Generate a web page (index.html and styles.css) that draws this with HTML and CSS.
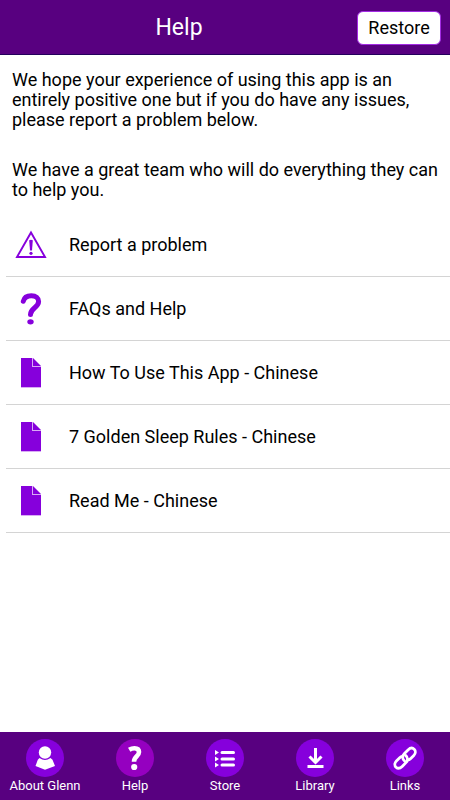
FILE: index.html
```html
<!DOCTYPE html>
<html lang="en">
<head>
<meta charset="utf-8">
<meta name="viewport" content="width=device-width, initial-scale=1">
<title>Help</title>
<link rel="stylesheet" href="styles.css">
</head>
<body>
<svg class="symbols" aria-hidden="true">
  <symbol id="document" viewBox="0 0 20 30">
    <path fill="#8600dc" d="M0 0h11v9h9v20H0z"/>
    <path fill="#8600dc" d="M12 0l8 8h-8z"/>
    <path fill="#d9abf4" d="M0 29h20v1H0zM11 0h1v8h8v1h-9z"/>
  </symbol>
</svg>
<header class="topbar">
  <h1 class="title">Help</h1>
  <button class="restore" type="button">Restore</button>
</header>
<main class="content">
  <div class="intro">
    <p>We hope your experience of using this app is an entirely positive one but if you do have any issues, please report a problem below.</p>
    <p>We have a great team who will do everything they can to help you.</p>
  </div>
  <ul class="list">
    <li><a class="row" href="#report">
      <svg class="icon" viewBox="0 0 32 32" aria-hidden="true"><path d="M16 3.500L30 28H2z" fill="none" stroke="#8600dc" stroke-width="1.900"/><path d="M14.200 11.200q1.800-1 3.600 0l-.8 10.300h-2z" fill="#8600dc"/><circle cx="16" cy="24.300" r="1.600" fill="#8600dc"/></svg>
      <span>Report a problem</span></a></li>
    <li><a class="row" href="#faqs">
      <svg class="icon" viewBox="0 0 32 32" aria-hidden="true"><path d="M8.300 8.300C9.300 4 12.300 2.800 16.300 2.800c4.800 0 7.300 2.300 7.300 5.700 0 6-8.100 6.500-8.100 13" fill="none" stroke="#8600dc" stroke-width="5" stroke-linecap="round"/><ellipse cx="15.500" cy="28.800" rx="3.200" ry="2.600" fill="#8600dc"/></svg>
      <span>FAQs and Help</span></a></li>
    <li><a class="row" href="#how-to"><svg class="icon doc" aria-hidden="true"><use href="#document"/></svg><span>How To Use This App - Chinese</span></a></li>
    <li><a class="row" href="#rules"><svg class="icon doc" aria-hidden="true"><use href="#document"/></svg><span>7 Golden Sleep Rules - Chinese</span></a></li>
    <li><a class="row" href="#read-me"><svg class="icon doc" aria-hidden="true"><use href="#document"/></svg><span>Read Me - Chinese</span></a></li>
  </ul>
</main>
<nav class="tabs">
  <a class="tab" href="#about">
    <svg class="badge" viewBox="0 0 38 38" aria-hidden="true"><circle cx="19" cy="19" r="19" fill="#8600dc"/><circle cx="19" cy="13.500" r="6.200" fill="#fff"/><path d="M13.500 19q5.500 4 11 0l2 1.800 2.500 6.200-10 3.800-9.500-3.800 2.300-6.200z" fill="#fff"/></svg>
    <span>About Glenn</span></a>
  <a class="tab" href="#help" aria-current="page">
    <svg class="badge" viewBox="0 0 38 38" aria-hidden="true"><circle cx="19" cy="19" r="19" fill="#9500c0"/><path d="M13.200 10.800q2.500-1.500 5.300-1.500c3 0 4.500 1.400 4.500 3.800 0 4.500-5 4-5 9.700" fill="none" stroke="#fff" stroke-width="4.600"/><circle cx="18.200" cy="28" r="3.100" fill="#fff"/></svg>
    <span>Help</span></a>
  <a class="tab" href="#store">
    <svg class="badge" viewBox="0 0 38 38" aria-hidden="true"><circle cx="19" cy="19" r="19" fill="#8600dc"/><path d="M9 11l4 2.500L9 16zM9 17.500l4 2.500-4 2.500zM9 23.500l4 2.500-4 2.500z" fill="#fff"/><path d="M16 13.500h11.500M16 20h11.500M16 26h11.500" stroke="#fff" stroke-width="3" stroke-linecap="round"/></svg>
    <span>Store</span></a>
  <a class="tab" href="#library">
    <svg class="badge" viewBox="0 0 38 38" aria-hidden="true"><circle cx="19" cy="19" r="19" fill="#8600dc"/><path d="M19.500 9v14M13.500 17.500l6 6 6-6M11.500 27.500h16" fill="none" stroke="#fff" stroke-width="3"/></svg>
    <span>Library</span></a>
  <a class="tab" href="#links">
    <svg class="badge" viewBox="0 0 38 38" aria-hidden="true"><circle cx="19" cy="19" r="19" fill="#8600dc"/><g fill="none" stroke="#fff" stroke-width="2.800" stroke-linecap="round" stroke-linejoin="round"><path d="M18.600 22C16 19.800 16.200 16.800 18.200 14.800L22 11C24.500 8.500 26.800 8.800 28.200 10.200 29.800 11.800 29.800 14.400 27.800 16.400L24.500 19.700C23.500 20.700 22.400 21 21.500 20.900"/><path d="M19.600 16.400C22.200 18.600 22 21.600 20 23.600L16.200 27.400C13.700 29.900 11.400 29.600 10 28.200 8.400 26.600 8.400 24 10.400 22L13.700 18.700C14.700 17.700 15.500 17.400 16.300 17.500"/></g></svg>
    <span>Links</span></a>
</nav>
</body>
</html>
```
FILE: styles.css
```css
* { box-sizing: border-box; }
body {
  margin: 0;
  min-height: 100vh;
  display: flex;
  flex-direction: column;
  background: #fff;
  color: #000;
  font: 18px/20px Roboto, "Liberation Sans", sans-serif;
}
.symbols { display: none; }
.topbar {
  display: grid;
  grid-template-columns: 84px 1fr 84px;
  align-items: center;
  gap: 8px;
  padding: 11px 9px 9px;
  background: #580080;
  border-bottom: 1px solid #24005c;
}
.title {
  grid-column: 2;
  margin: 0;
  padding-right: 92px;
  color: #fff;
  font-size: 23px;
  font-weight: 400;
  line-height: 34px;
  text-align: center;
}
.restore {
  height: 34px;
  padding: 0;
  background: #fff;
  border: 1px solid #a32be4;
  border-radius: 6px;
  color: #000;
  font: inherit;
}
.content { flex: 1; }
.intro { padding: 15px 12px 0; }
.intro p { margin: 0 0 30px; }
.intro p:last-child { margin: 0; }
.list {
  margin: 13px 0 0 6px;
  padding: 0;
  list-style: none;
}
.row {
  display: flex;
  align-items: center;
  gap: 22px;
  height: 64px;
  padding-left: 9px;
  border-bottom: 1px solid #d4d4d4;
  color: inherit;
  text-decoration: none;
}
.icon { width: 32px; height: 32px; }
.doc { height: 30px; }
.tabs {
  display: grid;
  grid-template-columns: repeat(5, 1fr);
  height: 68px;
  background: #580080;
}
.tab {
  display: flex;
  flex-direction: column;
  align-items: center;
  padding-top: 7px;
  color: #fff;
  font-size: 13px;
  line-height: 18px;
  text-decoration: none;
}
.badge { width: 38px; height: 38px; }
```
